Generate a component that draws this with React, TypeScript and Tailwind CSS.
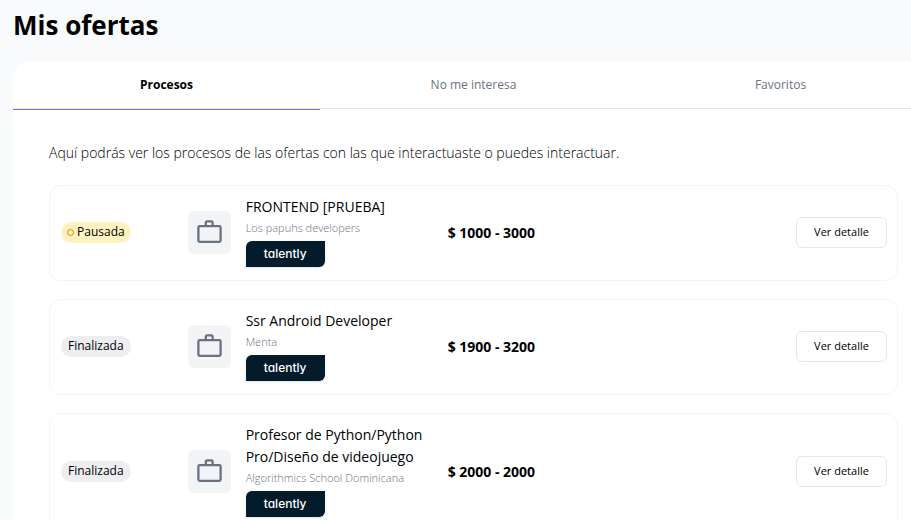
type Oferta = {
  titulo: string;
  empresa: string;
  salario: string;
  estado: "Pausada" | "Finalizada";
};

const tabs = ["Procesos", "No me interesa", "Favoritos"];

const ofertas: Oferta[] = [
  {
    titulo: "FRONTEND [PRUEBA]",
    empresa: "Los papuhs developers",
    salario: "$ 1000 - 3000",
    estado: "Pausada",
  },
  {
    titulo: "Ssr Android Developer",
    empresa: "Menta",
    salario: "$ 1900 - 3200",
    estado: "Finalizada",
  },
  {
    titulo: "Profesor de Python/Python Pro/Diseño de videojuego",
    empresa: "Algorithmics School Dominicana",
    salario: "$ 2000 - 2000",
    estado: "Finalizada",
  },
];

function BriefcaseIcon() {
  return (
    <svg
      viewBox="0 0 27 27"
      className="size-[27px] text-gray-500"
      fill="none"
      stroke="currentColor"
      strokeWidth="2.3"
      strokeLinejoin="round"
      aria-hidden="true"
    >
      <rect x="2.4" y="7.2" width="22.2" height="15.6" rx="1.3" />
      <path d="M9.8 7V3.6a1.2 1.2 0 0 1 1.2-1.2h4.4a1.2 1.2 0 0 1 1.2 1.2V7" />
    </svg>
  );
}

function Estado({ estado }: { estado: Oferta["estado"] }) {
  if (estado === "Pausada") {
    return (
      <span className="flex h-[21px] shrink-0 items-center gap-[3px] rounded-full bg-[#fef3c0] px-[6px] text-[12px]">
        <span className="size-[7px] rounded-full border border-yellow-600" />
        Pausada
      </span>
    );
  }
  return (
    <span className="flex h-[21px] shrink-0 items-center rounded-full bg-[#eeeef0] px-[7px] text-[12px]">
      {estado}
    </span>
  );
}

function OfertaCard({ oferta }: { oferta: Oferta }) {
  return (
    <li className="flex items-center rounded-xl border border-gray-100 pt-[10px] pr-[10px] pb-[12px] pl-[11px]">
      <Estado estado={oferta.estado} />
      <div className="ml-[57px] flex size-[43px] shrink-0 items-center justify-center rounded-md bg-gray-100">
        <BriefcaseIcon />
      </div>
      <div className="ml-[15px] w-[202px] shrink-0">
        <h2 className="pr-4 text-[14px] leading-[22px] font-medium">{oferta.titulo}</h2>
        <p className="text-[11px] leading-[20px] font-light text-gray-500">{oferta.empresa}</p>
        <div className="mt-[3px] mb-px flex h-[26px] w-[79px] items-center justify-center rounded-tl-md rounded-br-md bg-[#031b2a] font-['Inter'] text-[12px] font-medium text-white shadow-sm [font-feature-settings:'cv11']">
          talently
        </div>
      </div>
      <p className="pt-px text-[14px] font-bold">{oferta.salario}</p>
      <button
        type="button"
        className="ml-auto h-[31px] w-[91px] shrink-0 rounded-md border border-gray-200 bg-white text-[11px]"
      >
        Ver detalle
      </button>
    </li>
  );
}

export default function App() {
  return (
    <main className="min-h-screen overflow-hidden bg-[#f9fafc] pl-[13px] font-['Open_Sans','Noto_Sans',sans-serif] text-black">
      <h1 className="pt-[7px] text-[26px] leading-[36px] font-bold">Mis ofertas</h1>

      <section className="mt-[18px] -mr-[23px] rounded-t-2xl bg-white">
        <div role="tablist" className="grid grid-cols-3">
          {tabs.map((tab, i) => (
            <button
              key={tab}
              type="button"
              role="tab"
              aria-selected={i === 0}
              className={
                i === 0
                  ? "h-[48px] border-b border-gray-200 text-[12px] font-bold shadow-[0_1px_0_#9061f9]"
                  : "h-[48px] border-b border-gray-200 text-[12px] text-gray-500"
              }
            >
              {tab}
            </button>
          ))}
        </div>

        <div className="px-[36px] pt-[33px]">
          <p className="text-[14px] leading-[22px] font-light">
            Aquí podrás ver los procesos de las ofertas con las que interactuaste o puedes interactuar.
          </p>
          <ul className="mt-[21px] flex flex-col gap-[18px]">
            {ofertas.map((oferta) => (
              <OfertaCard key={oferta.titulo} oferta={oferta} />
            ))}
          </ul>
        </div>
      </section>
    </main>
  );
}
